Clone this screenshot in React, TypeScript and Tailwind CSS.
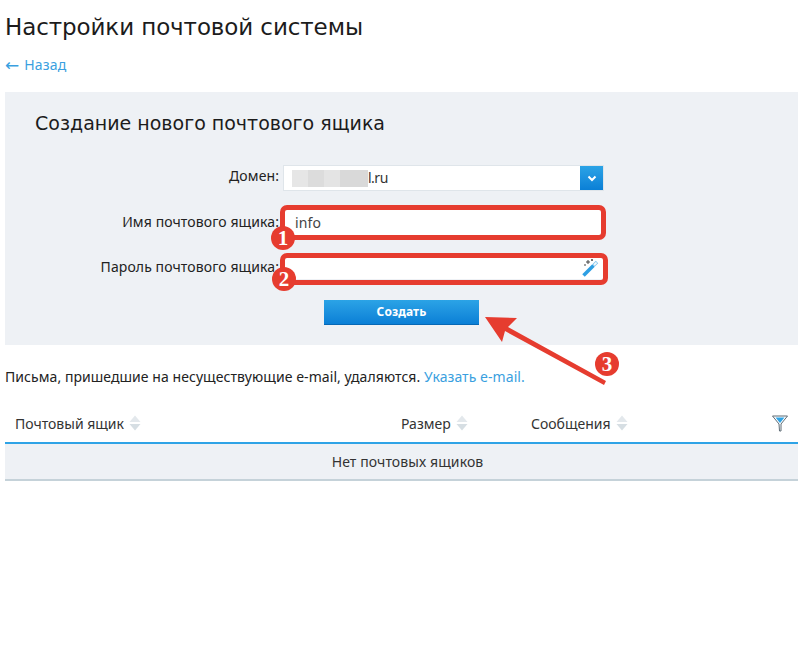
import React from "react";

function Sort() {
  return (
    <svg width="12" height="16" viewBox="0 0 12 16" className="ml-[5px] shrink-0">
      <path d="M6 0.5 L11.5 7 H0.5 Z" fill="#e3e8ec" />
      <path d="M0.5 9 H11.5 L6 15.5 Z" fill="#d6dee3" />
    </svg>
  );
}

function Badge({ n, className }: { n: string; className: string }) {
  return (
    <div
      className={
        "absolute w-6 h-6 rounded-full bg-[#e63c2f] text-white flex items-center justify-center text-[21px] font-bold leading-none font-['Liberation_Serif',serif] " +
        className
      }
    >
      {n}
    </div>
  );
}

export default function App() {
  return (
    <div className="relative w-[809px] h-[660px] bg-white overflow-hidden text-[#222] text-[14px] tracking-[0.1px] font-['Noto_Sans',sans-serif]">
      <div className="pl-[5px] pr-[11px]">
        <h1 className="pt-[12px] h-[52px] text-[23px] leading-[30px] tracking-[-0.1px] text-[#1c1c1c] font-['DejaVu_Sans',sans-serif]">
          Настройки почтовой системы
        </h1>
        <div className="mt-[3px] h-[20px] flex items-center leading-[20px] text-[#3a9fe0]">
          <span className="text-[17px] leading-[20px] tracking-normal font-['DejaVu_Sans',sans-serif]">←</span>
          <span className="ml-[5px] tracking-[0.2px]">Назад</span>
        </div>
        <div className="mt-[17px] h-[253px] bg-[#eef1f5] flex flex-col">
          <h2 className="pl-[30px] pt-[17px] h-[73px] text-[19px] leading-[28px] tracking-normal text-[#1c1c1c] font-['DejaVu_Sans',sans-serif]">
            Создание нового почтового ящика
          </h2>
          <div className="flex items-center h-[26px]">
            <label className="w-[274px] text-right leading-[20px] pb-[4px]">Домен:</label>
            <div className="ml-[4px] w-[321px] h-[26px] bg-white border border-[#dfe5ea] flex items-center">
              <div className="ml-[8px] flex h-[17px] w-[76px]">
                <div className="w-[16px] bg-[#e6e6e6]" />
                <div className="w-[16px] bg-[#dcdcdc]" />
                <div className="w-[16px] bg-[#e4e4e4]" />
                <div className="w-[28px] bg-[#d9d9d9]" />
              </div>
              <span className="flex-1 leading-[20px] tracking-[-0.5px] text-[#333]">l.ru</span>
              <div className="w-[23px] h-[24px] bg-gradient-to-b from-[#2ba3e6] to-[#0a7fd6] flex items-center justify-center">
                <svg width="10" height="7" viewBox="0 0 10 7">
                  <path d="M1.5 1.5 L5 5 L8.5 1.5" fill="none" stroke="#fff" strokeWidth="2" />
                </svg>
              </div>
            </div>
          </div>
          <div className="flex items-center h-[27px] mt-[18px]">
            <label className="w-[274px] text-right leading-[20px] pb-[2px]">Имя почтового ящика:</label>
            <div className="ml-[4px] w-[320px] h-[27px] bg-white flex items-center pl-[12px] text-[#444] leading-[20px]">
              info
            </div>
          </div>
          <div className="flex items-center h-[22px] mt-[21px]">
            <label className="w-[274px] text-right leading-[20px] pb-[2px]">Пароль почтового ящика:</label>
            <div className="ml-[4px] w-[320px] h-[22px] bg-white flex items-center justify-end pr-[4px]">
              <svg width="17" height="18" viewBox="0 0 17 18">
                <path d="M1.5 16.5 L11.5 6.5" stroke="#2d9fe3" strokeWidth="3.6" fill="none" />
                <path d="M11.5 6.5 L15 3" stroke="#7fc4ee" strokeWidth="3.4" fill="none" />
                <path d="M12 6 L14.5 3.5" stroke="#f3f8fb" strokeWidth="1.8" fill="none" />
                <path d="M6 1 v4 M4 3 h4 M10 0 v2 M9 1 h2 M2 6 h2" stroke="#444" strokeWidth="1" fill="none" />
              </svg>
            </div>
          </div>
          <div className="flex pl-[319px] mt-[21px]">
            <button className="w-[155px] h-[25px] bg-gradient-to-b from-[#2ba3e6] to-[#0a7fd6] border-b border-[#0668b5] text-white text-[12px] font-bold leading-[20px] font-['Noto_Sans',sans-serif]">
              Создать
            </button>
          </div>
        </div>
        <p className="mt-[22px] h-[20px] leading-[20px] tracking-[0.06px] text-[#222]">
          Письма, пришедшие на несуществующие e-mail, удаляются.{" "}
          <span className="text-[#3a9fe0]">Указать e-mail.</span>
        </p>
        <div className="mt-[15px] h-[42px] flex items-center pt-[2px] border-b-2 border-[#2ea3e6] text-[#333] tracking-normal">
          <div className="w-[396px] pl-[10px] flex items-center">
            Почтовый ящик
            <Sort />
          </div>
          <div className="w-[130px] flex items-center">
            Размер
            <Sort />
          </div>
          <div className="flex-1 flex items-center">
            Сообщения
            <Sort />
          </div>
          <svg width="16" height="17" viewBox="0 0 16 17" className="mr-[10px]">
            <path d="M0.5 1 H15.5 L9 9 V16 H7.5 L7 9 Z" fill="none" stroke="#5d6b75" strokeWidth="1" />
            <path d="M3.5 2.5 H12.5 L8 8 Z" fill="#2ea3e6" />
          </svg>
        </div>
        <div className="h-[37px] bg-[#eef1f5] border-b-2 border-[#c5d2d9] flex items-center justify-center pl-[12px] text-[#333] leading-[20px]">
          Нет почтовых ящиков
        </div>
      </div>

      {/* annotations drawn over the page */}
      <div className="absolute left-[280px] top-[205px] w-[326px] h-[35px] border-[5px] border-[#e63c2f] rounded-[7px]" />
      <div className="absolute left-[280px] top-[253px] w-[328px] h-[32px] border-[5px] border-[#e63c2f] rounded-[7px]" />
      <Badge n="1" className="left-[271px] top-[226px]" />
      <Badge n="2" className="left-[272px] top-[267px]" />
      <Badge n="3" className="left-[595px] top-[352px]" />
      <svg className="absolute left-0 top-0 pointer-events-none" width="809" height="660">
        <path d="M485 317 L517 318 L508 327 L606 381 L604 385 L505 331 L502 342 Z" fill="#e63c2f" />
      </svg>
    </div>
  );
}
